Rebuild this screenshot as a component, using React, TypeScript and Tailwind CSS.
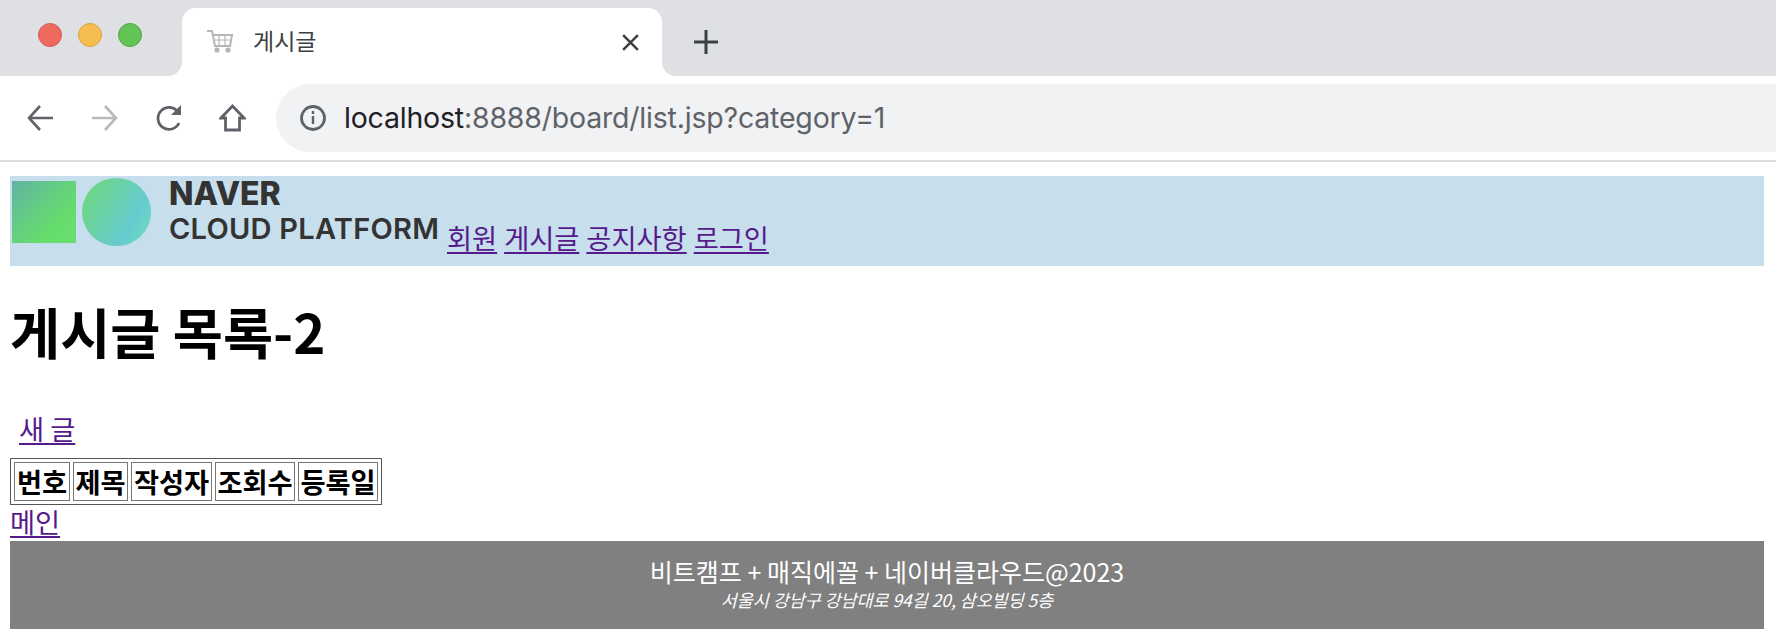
const KR = "font-['Noto_Sans_CJK_KR','Noto_Sans',sans-serif]";

const NAV_LINKS = ["회원", "게시글", "공지사항", "로그인"];
const COLUMNS = ["번호", "제목", "작성자", "조회수", "등록일"];
const CELL_WIDTHS = ["w-[56px]", "w-[55px]", "w-[81px]", "w-[80px]", "w-[80px]"];

function BrowserChrome() {
  return (
    <div>
      <div className="flex h-[76px] items-end bg-[#dfe0e4]">
        <div className="flex h-full w-[182px] items-center gap-[16px] pb-[6px] pl-[38px]">
          <span className="size-[24px] rounded-full border border-[#d65b50] bg-[#ee6a5f]" />
          <span className="size-[24px] rounded-full border border-[#d9a53f] bg-[#f5bd4f]" />
          <span className="size-[24px] rounded-full border border-[#4fa843] bg-[#61c454]" />
        </div>
        <div className="relative flex h-[68px] w-[480px] items-center rounded-t-[14px] bg-white pl-[24px] pr-[22px]">
          {/* flares where the tab meets the toolbar */}
          <svg className="absolute bottom-0 left-[-14px]" width="14" height="14" viewBox="0 0 14 14">
            <path d="M14 0v14H0A14 14 0 0 0 14 0z" fill="#ffffff" />
          </svg>
          <svg className="absolute bottom-0 right-[-14px]" width="14" height="14" viewBox="0 0 14 14">
            <path d="M0 0v14h14A14 14 0 0 1 0 0z" fill="#ffffff" />
          </svg>
          <svg className="mb-[3px]" width="30" height="24" viewBox="0 0 30 24" fill="none" stroke="#b4b6b8" strokeWidth="2">
            <path d="M1 2h5l3 15h15l2-11H7" />
            <path d="M9 11h16M13 6v11M19 6v11" strokeWidth="1.2" />
            <circle cx="11" cy="21" r="1.6" fill="#b4b6b8" />
            <circle cx="22" cy="21" r="1.6" fill="#b4b6b8" />
          </svg>
          <span className={`mb-[3px] ml-[17px] flex-1 text-[23px] text-[#3c4043] ${KR}`}>게시글</span>
          <svg width="19" height="19" viewBox="0 0 18 18" stroke="#3c4043" strokeWidth="2.4">
            <path d="M2 2l14 14M16 2L2 16" />
          </svg>
        </div>
        <div className="flex h-[68px] w-[88px] items-center justify-center">
          <svg width="24" height="24" viewBox="0 0 24 24" stroke="#3c4043" strokeWidth="3">
            <path d="M12 0v24M0 12h24" />
          </svg>
        </div>
      </div>
      <div className="flex h-[86px] items-start border-b-2 border-[#dcdcdc] bg-white pt-[8px]">
        <div className="flex h-[68px] w-[276px] items-center gap-[37px] pl-[27px]">
          <svg width="27" height="26" viewBox="0 0 27 26" fill="none" stroke="#5f6368" strokeWidth="2.6">
            <path d="M26 13H2M13 1L2 13l11 12" />
          </svg>
          <svg width="27" height="26" viewBox="0 0 27 26" fill="none" stroke="#b8babc" strokeWidth="2.6">
            <path d="M1 13h24M14 1l11 12-11 12" />
          </svg>
          <svg width="27" height="28" viewBox="0 0 27 28" fill="none" stroke="#5f6368" strokeWidth="2.8">
            <path d="M24 19a11 11 0 1 1-1-11" />
            <path d="M26 1v10H16z" fill="#5f6368" stroke="none" />
          </svg>
          <svg width="27" height="28" viewBox="0 0 27 28" fill="none" stroke="#5f6368" strokeWidth="2.8">
            <path d="M13.5 2L2 14h4.5v12h14V14H25z" />
          </svg>
        </div>
        <div className="flex h-[68px] flex-1 items-center rounded-l-[34px] bg-[#f1f2f4] pl-[23px]">
          <svg width="28" height="28" viewBox="0 0 28 28" fill="none" stroke="#5f6368" strokeWidth="2.8">
            <circle cx="14" cy="14" r="11.5" />
            <path d="M14 12v8M14 7v3" strokeWidth="2.4" />
          </svg>
          <span className="ml-[17px] font-['Inter',sans-serif] text-[28.5px] tracking-[-0.2px] text-[#5f6368]">
            <span className="text-[#202124]">localhost</span>:8888/board/list.jsp?category=1
          </span>
        </div>
      </div>
    </div>
  );
}

function Logo() {
  return (
    <div className="flex h-[90px] w-[437px] items-start pl-[2px]">
      <div className="mt-[5px] h-[62px] w-[64px] bg-[linear-gradient(135deg,#62b4a4,#66dd6c_70%)]" />
      <div className="ml-[6px] mt-[2px] h-[68px] w-[69px] rounded-full bg-[linear-gradient(120deg,#6fd873,#66cbd0_70%,#6ee0b8)]" />
      <div className="ml-[18px] mt-[3px] font-['Inter',sans-serif] text-[#333333]">
        <div className="text-[32px] font-extrabold leading-[30px]">NAVER</div>
        <div className="mt-[3px] whitespace-nowrap text-[29px] font-semibold leading-[34px] tracking-[0.25px]">CLOUD PLATFORM</div>
      </div>
    </div>
  );
}

export default function App() {
  return (
    <div className={`h-[642px] overflow-hidden bg-white text-[27.25px] text-black ${KR}`}>
      <BrowserChrome />
      <div className="mr-[2px] px-[10px] pb-[14px] pt-[14px]">
        <header className="flex h-[90px] bg-[#c7deec]">
          <Logo />
          <nav className="mt-[43px] flex gap-[7px] leading-[36px] text-[#551a8b]">
            {NAV_LINKS.map((t) => (
              <a key={t} className="h-[35px] underline underline-offset-[3px]">{t}</a>
            ))}
          </nav>
        </header>
        <h1 className="mt-[33px] text-[54.5px] font-bold leading-[64px]">게시글 목록-2</h1>
        <div className="mt-[45px] pl-[9px] leading-[40px]">
          <a className="text-[#551a8b] underline underline-offset-[3px]">새 글</a>
        </div>
        <table className="mt-[10px] w-[372px] table-fixed border-separate border-spacing-[3px] border border-[#555555]">
          <thead>
            <tr>
              {COLUMNS.map((c, i) => (
                <th key={c} className={`${CELL_WIDTHS[i]} h-[39px] border border-[#777777] p-0 text-[27.25px] font-bold leading-[37px]`}>{c}</th>
              ))}
            </tr>
          </thead>
        </table>
        <div className="mb-[3px] leading-[33px]">
          <a className="text-[#551a8b] underline underline-offset-[3px]">메인</a>
        </div>
        <footer className="flex h-[88px] flex-col items-center bg-[#808080] pt-[13px] text-white">
          <div className="text-[25px] leading-[34px]">비트캠프 + 매직에꼴 + 네이버클라우드@2023</div>
          <div className="text-[17.4px] italic leading-[24px]">서울시 강남구 강남대로 94길 20, 삼오빌딩 5층</div>
        </footer>
      </div>
    </div>
  );
}
